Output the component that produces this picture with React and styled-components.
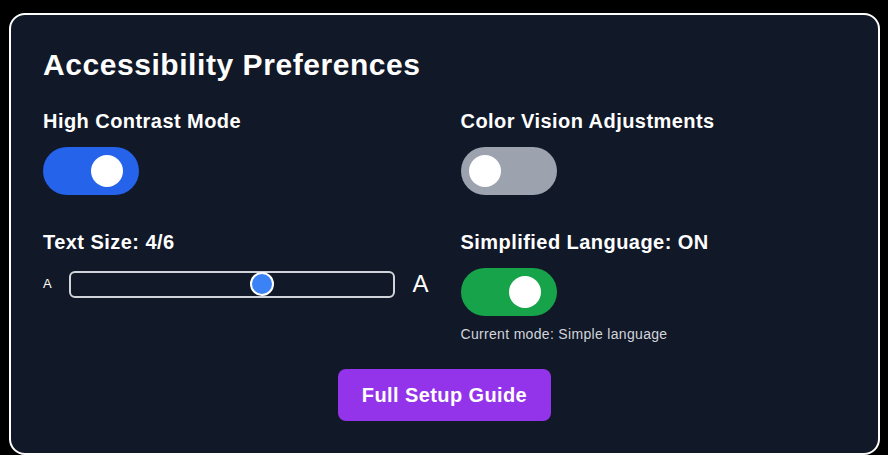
import React, { useState } from 'react';
import styled, { createGlobalStyle } from 'styled-components';

const GlobalStyle = createGlobalStyle`
  html, body {
    margin: 0;
    padding: 0;
    background: #000000;
    font-family: "Liberation Sans", Arial, sans-serif;
    letter-spacing: 0.02em;
  }
  * {
    box-sizing: border-box;
  }
`;

function Toggle({ on, color, onClick, label }) {
  return (
    <Switch type="button" role="switch" aria-checked={on} aria-label={label} $on={on} $color={color} onClick={onClick}>
      <Knob $on={on} />
    </Switch>
  );
}

function App() {
  const [contrast, setContrast] = useState(true);
  const [colorVision, setColorVision] = useState(false);
  const [simple, setSimple] = useState(true);
  const [size, setSize] = useState(4);

  return (
    <>
      <GlobalStyle />
      <Card>
        <Title>Accessibility Preferences</Title>
        <Grid>
          <Section>
            <Label>High Contrast Mode</Label>
            <Toggle on={contrast} color="#2563eb" label="High Contrast Mode" onClick={() => setContrast(!contrast)} />
          </Section>
          <Section>
            <Label>Color Vision Adjustments</Label>
            <Toggle on={colorVision} color="#2563eb" label="Color Vision Adjustments" onClick={() => setColorVision(!colorVision)} />
          </Section>
          <Section>
            <Label>Text Size: {size}/6</Label>
            <SliderRow>
              <SizeMark $big={false}>A</SizeMark>
              <Range
                type="range"
                min={1}
                max={6}
                value={size}
                onChange={(e) => setSize(Number(e.target.value))}
              />
              <SizeMark $big>A</SizeMark>
            </SliderRow>
          </Section>
          <Section>
            <Label>Simplified Language: {simple ? 'ON' : 'OFF'}</Label>
            <Toggle on={simple} color="#16a34a" label="Simplified Language" onClick={() => setSimple(!simple)} />
            <Hint>Current mode: {simple ? 'Simple language' : 'Standard language'}</Hint>
          </Section>
        </Grid>
        <Footer>
          <GuideButton type="button">Full Setup Guide</GuideButton>
        </Footer>
      </Card>
    </>
  );
}

const Card = styled.div`
  margin: 13px 8px 0 9px;
  padding: 32px;
  background: #111827;
  border: 2px solid #ffffff;
  border-radius: 16px;
  color: #ffffff;
`;

const Title = styled.h2`
  margin: 0 0 24px;
  font-size: 30px;
  line-height: 36px;
  font-weight: 700;
  letter-spacing: 0.56px;
`;

const Grid = styled.div`
  display: grid;
  grid-template-columns: 1fr 1fr;
  gap: 33px 32px;
`;

const Section = styled.div`
  display: flex;
  flex-direction: column;
  align-items: flex-start;
`;

const Label = styled.div`
  margin-bottom: 12px;
  font-size: 20px;
  line-height: 28px;
  font-weight: 700;
  letter-spacing: 0.45px;
`;

const Switch = styled.button`
  position: relative;
  width: 96px;
  height: 48px;
  padding: 0;
  border: none;
  border-radius: 9999px;
  background: ${(p) => (p.$on ? p.$color : '#9ca3af')};
  cursor: pointer;
`;

const Knob = styled.span`
  position: absolute;
  top: 8px;
  left: 8px;
  width: 32px;
  height: 32px;
  border-radius: 50%;
  background: #ffffff;
  transform: translateX(${(p) => (p.$on ? '40px' : '0')});
  transition: transform 0.2s;
`;

const SliderRow = styled.div`
  display: flex;
  align-items: center;
  gap: 17px;
  width: 100%;
`;

const SizeMark = styled.span`
  font-size: ${(p) => (p.$big ? '24px' : '13px')};
  line-height: 32px;
  letter-spacing: 0;
`;

const Range = styled.input`
  flex: 1;
  height: 27px;
  margin: 0;
  padding: 0;
  appearance: none;
  -webkit-appearance: none;
  background: transparent;
  border: 2px solid #d1d5db;
  border-radius: 6px;

  &::-webkit-slider-thumb {
    -webkit-appearance: none;
    width: 24px;
    height: 24px;
    border-radius: 50%;
    background: #3b82f6;
    border: 2px solid #ffffff;
  }
`;

const Hint = styled.p`
  margin: 8px 0 0;
  font-size: 14px;
  line-height: 20px;
  color: #d1d5db;
`;

const Footer = styled.div`
  display: flex;
  justify-content: center;
  margin-top: 25px;
`;

const GuideButton = styled.button`
  padding: 12px 24px;
  border: none;
  border-radius: 8px;
  background: #9333ea;
  color: #ffffff;
  font-family: "Liberation Sans", Arial, sans-serif;
  font-size: 20px;
  line-height: 28px;
  font-weight: 700;
  letter-spacing: 0.02em;
  cursor: pointer;
`;

export default App;
